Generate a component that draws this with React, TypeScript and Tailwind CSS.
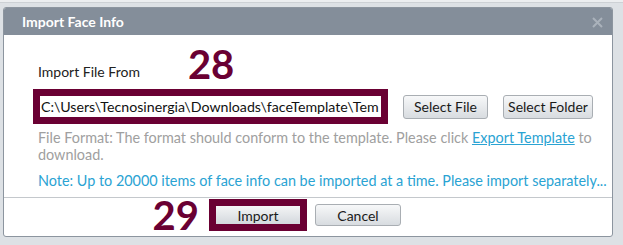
import React from "react";

const font = { fontFamily: "Lato, 'Open Sans', sans-serif" };

function Btn({ children, className = "" }: { children: React.ReactNode; className?: string }) {
  return (
    <div
      className={
        "flex items-center justify-center rounded-[3px] border border-[#a9aeb3] bg-gradient-to-b from-[#f7f8f9] to-[#d8dce0] text-[14px] text-[#1a1a1a] " +
        className
      }
    >
      {children}
    </div>
  );
}

export default function App() {
  return (
    <div className="w-[623px] h-[245px] overflow-hidden bg-[#dde1e5]" style={font}>
      <div className="h-[3px] bg-[#eceef0] border-b border-[#cdd1d5]" />
      <div className="ml-[3px] mt-[4px] w-[610px] h-[230px] flex flex-col rounded-[3px] border border-[#8c959f] bg-white overflow-hidden">
        <div className="h-[27px] shrink-0 flex items-center justify-between bg-[#848e9a] pl-[18px] pr-[9px]">
          <span className="text-[14px] font-bold text-white">Import Face Info</span>
          <svg width="11" height="11" viewBox="0 0 11 11" className="mt-[1px]">
            <path d="M1 1L10 10M10 1L1 10" stroke="#aab2bb" strokeWidth="2" />
          </svg>
        </div>
        <div className="flex-1 pl-[34px] pr-[4px]">
          <div className="h-[54px] flex items-end">
            <span className="text-[14px] text-[#222] mb-[7px]">Import File From</span>
            <span className="ml-[48px] text-[40px] font-bold leading-none text-[#6a0033] mb-[5px]">28</span>
          </div>
          <div className="flex items-center">
            <div className="-ml-[5px] w-[355px] h-[35px] border-[7px] border-[#6a0033] bg-white">
              <div className="h-full pl-[1px] text-[14.2px] leading-[21px] text-[#111] whitespace-nowrap overflow-hidden">
                C:\Users\Tecnosinergia\Downloads\faceTemplate\Tem
              </div>
            </div>
            <Btn className="ml-[15px] w-[85px] h-[24px]">Select File</Btn>
            <Btn className="ml-[15px] w-[90px] h-[24px]">Select Folder</Btn>
          </div>
          <div className="mt-[5px] text-[14.4px] leading-[17px] text-[#a0a0a0]">
            File Format: The format should conform to the template. Please click{" "}
            <span className="text-[#2aa3d3] underline">Export Template</span> to download.
          </div>
          <div className="mt-[9px] text-[14.4px] leading-[17px] text-[#2aa3d3] whitespace-nowrap">
            Note: Up to 20000 items of face info can be imported at a time. Please import separately...
          </div>
        </div>
        <div className="h-[39px] shrink-0 border-t border-[#c4c8cc] flex justify-center items-start pt-[1px] pr-[6px]">
          <div className="relative">
            <span className="absolute right-full mr-[10px] top-[-4px] text-[40px] font-bold leading-none text-[#6a0033]">29</span>
            <div className="w-[98px] h-[32px] border-[7px] border-[#6a0033]">
              <div className="h-full bg-gradient-to-b from-[#f4f5f6] to-[#d3d8dd] flex items-center justify-center text-[14px] text-[#1a1a1a]">
                Import
              </div>
            </div>
          </div>
          <Btn className="ml-[8px] mt-[5px] w-[86px] h-[22px]">Cancel</Btn>
        </div>
      </div>
    </div>
  );
}
